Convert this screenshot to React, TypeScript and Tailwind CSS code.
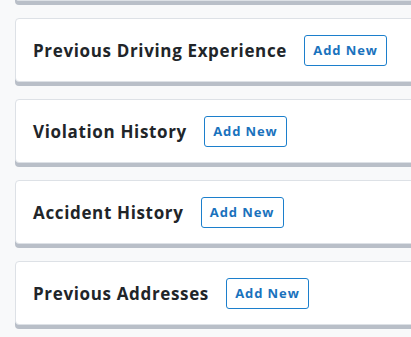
import React from "react";

const titles = [
  "Previous Driving Experience",
  "Violation History",
  "Accident History",
  "Previous Addresses",
];

function Card({ title }: { title?: string }) {
  return (
    <div className="h-[64px] w-[420px] shrink-0 rounded-[4px] border border-[#dde1e6] bg-white shadow-[0_4px_0_#b9bfc8] flex items-center pl-[17px]">
      {title && (
        <>
          <span className="text-[17px] font-bold tracking-[0.65px] text-[#212529] leading-none">
            {title}
          </span>
          <button className="ml-[17px] h-[31px] w-[83px] rounded-[3px] border border-[#1c7fcc] bg-white text-[13px] font-bold tracking-[0.9px] text-[#1a72bd] leading-none flex items-center justify-center">
            Add New
          </button>
        </>
      )}
    </div>
  );
}

export default function App() {
  return (
    <div
      className="h-[337px] w-[411px] overflow-hidden bg-[#f8f9fa]"
      style={{ fontFamily: '"Open Sans", "Liberation Sans", sans-serif' }}
    >
      <div className="mt-[-63px] ml-[15px] flex flex-col gap-[17px]">
        <Card />
        {titles.map((t) => (
          <Card key={t} title={t} />
        ))}
      </div>
    </div>
  );
}
